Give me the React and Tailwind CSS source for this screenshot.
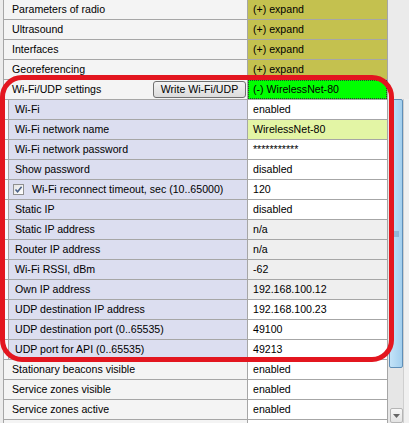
import React from 'react';

const topRows = ['Parameters of radio', 'Ultrasound', 'Interfaces', 'Georeferencing'];

const wifiRows = [
  { label: 'Wi-Fi', value: 'enabled', tone: 'bg-white' },
  { label: 'Wi-Fi network name', value: 'WirelessNet-80', tone: 'bg-[#e3f5a5]' },
  { label: 'Wi-Fi network password', value: '***********', tone: 'bg-white' },
  { label: 'Show password', value: 'disabled', tone: 'bg-white' },
  { label: 'Wi-Fi reconnect timeout, sec (10..65000)', value: '120', tone: 'bg-white', check: true },
  { label: 'Static IP', value: 'disabled', tone: 'bg-white' },
  { label: 'Static IP address', value: 'n/a', tone: 'bg-[#efefef]' },
  { label: 'Router IP address', value: 'n/a', tone: 'bg-[#efefef]' },
  { label: 'Wi-Fi RSSI, dBm', value: '-62', tone: 'bg-[#efefef]' },
  { label: 'Own IP address', value: '192.168.100.12', tone: 'bg-[#efefef]' },
  { label: 'UDP destination IP address', value: '192.168.100.23', tone: 'bg-white' },
  { label: 'UDP destination port (0..65535)', value: '49100', tone: 'bg-white' },
  { label: 'UDP port for API (0..65535)', value: '49213', tone: 'bg-white' },
];

const bottomRows = ['Stationary beacons visible', 'Service zones visible', 'Service zones active', ''];

// one grid line: gutter, optional indent, label cell, value cell
const Row = ({ indent, labelClass, label, valueClass, value }) => (
  <div className="flex h-[20px] shrink-0">
    <div className="w-[3px] bg-[#ececec]" />
    <div className="flex flex-1 border-l border-b border-[#a6a6a6]">
      {indent && <div className="w-[5px] bg-[#f7f8fc] border-r border-[#a6a6a6]" />}
      <div className={`flex flex-1 items-center whitespace-nowrap overflow-hidden ${labelClass}`}>{label}</div>
      <div className={`flex w-[140px] items-center border-l border-[#a6a6a6] whitespace-nowrap ${valueClass}`}>
        {value}
      </div>
    </div>
  </div>
);

const CheckBox = () => (
  <div className="ml-[4px] mr-[8px] flex h-[11px] w-[11px] items-center justify-center border border-[#8f8f8f] bg-gradient-to-br from-[#e4e4e4] to-white">
    <svg width="9" height="9" viewBox="0 0 9 9">
      <path d="M1.5 4.5 L3.6 6.8 L7.6 1.8" fill="none" stroke="#4b6289" strokeWidth="1.6" />
    </svg>
  </div>
);

export default function App() {
  return (
    <div
      className="relative flex h-[423px] w-[409px] overflow-hidden bg-[#ececec] text-[10.6px] text-black"
      style={{ fontFamily: '"Liberation Sans", Arial, sans-serif' }}
    >
      <div className="flex w-[388px] flex-col border-r border-[#a6a6a6]">
        {topRows.map((t) => (
          <Row
            key={t}
            labelClass="bg-[#f4f4f4] pl-[8px]"
            label={t}
            valueClass="bg-[#c4c14f] pl-[5px]"
            value="(+) expand"
          />
        ))}

        <Row
          labelClass="bg-[#f4f4f4] pl-[8px] justify-between"
          label={
            <>
              <span>Wi-Fi/UDP settings</span>
              <button
                type="button"
                className="mr-[1px] h-[17px] w-[93px] rounded-[3px] border border-[#707070] bg-gradient-to-b from-[#f3f3f3] to-[#dcdcdc] text-[10.6px] leading-none"
              >
                Write Wi-Fi/UDP
              </button>
            </>
          }
          valueClass="bg-[#00ff00]"
          value={
            <div className="flex h-full w-full items-center border border-dotted border-[#333] pl-[4px]">
              (-) WirelessNet-80
            </div>
          }
        />

        {wifiRows.map((r) => (
          <Row
            key={r.label}
            indent
            labelClass={`bg-[#dcdef0] ${r.check ? '' : 'pl-[6px]'}`}
            label={
              r.check ? (
                <>
                  <CheckBox />
                  <span>{r.label}</span>
                </>
              ) : (
                r.label
              )
            }
            valueClass={`${r.tone} pl-[5px]`}
            value={r.value}
          />
        ))}

        {bottomRows.map((t, i) => (
          <Row
            key={i}
            labelClass="bg-[#f4f4f4] pl-[8px]"
            label={t}
            valueClass="bg-white pl-[5px]"
            value={t ? 'enabled' : ''}
          />
        ))}
      </div>

      {/* right strip with vertical scrollbar */}
      <div className="flex w-[21px] flex-col">
        <div className="h-[99px] shrink-0 bg-[#ebebeb]" />
        <div className="flex flex-1">
          <div className="flex w-[15px] flex-col bg-[#e6e6e6]">
            <div className="ml-px flex h-[269px] w-[14px] items-center justify-center rounded-[2px] border border-[#5f8fb8] bg-gradient-to-r from-[#c3e3f8] to-[#a3cfee]">
              <svg width="6" height="6" viewBox="0 0 6 6">
                <path d="M0 1h6M0 3h6M0 5h6" stroke="#6c97bd" strokeWidth="1" />
              </svg>
            </div>
            <div className="flex-1" />
            <div className="ml-[2px] flex h-[15px] w-[13px] items-center justify-center rounded-[2px] border border-[#b5b5b5] bg-gradient-to-b from-[#f7f7f7] to-[#e3e3e3]">
              <svg width="7" height="4" viewBox="0 0 7 4">
                <path d="M0 0h7L3.5 4z" fill="#666" />
              </svg>
            </div>
          </div>
          <div className="w-[6px] border-l border-[#cfcfcf] bg-[#f0f0f0]" />
        </div>
      </div>

      <div className="pointer-events-none absolute left-0 top-[75px] h-[287px] w-[394px] rounded-[22px] border-[5px] border-[#e3161f]" />
    </div>
  );
}
